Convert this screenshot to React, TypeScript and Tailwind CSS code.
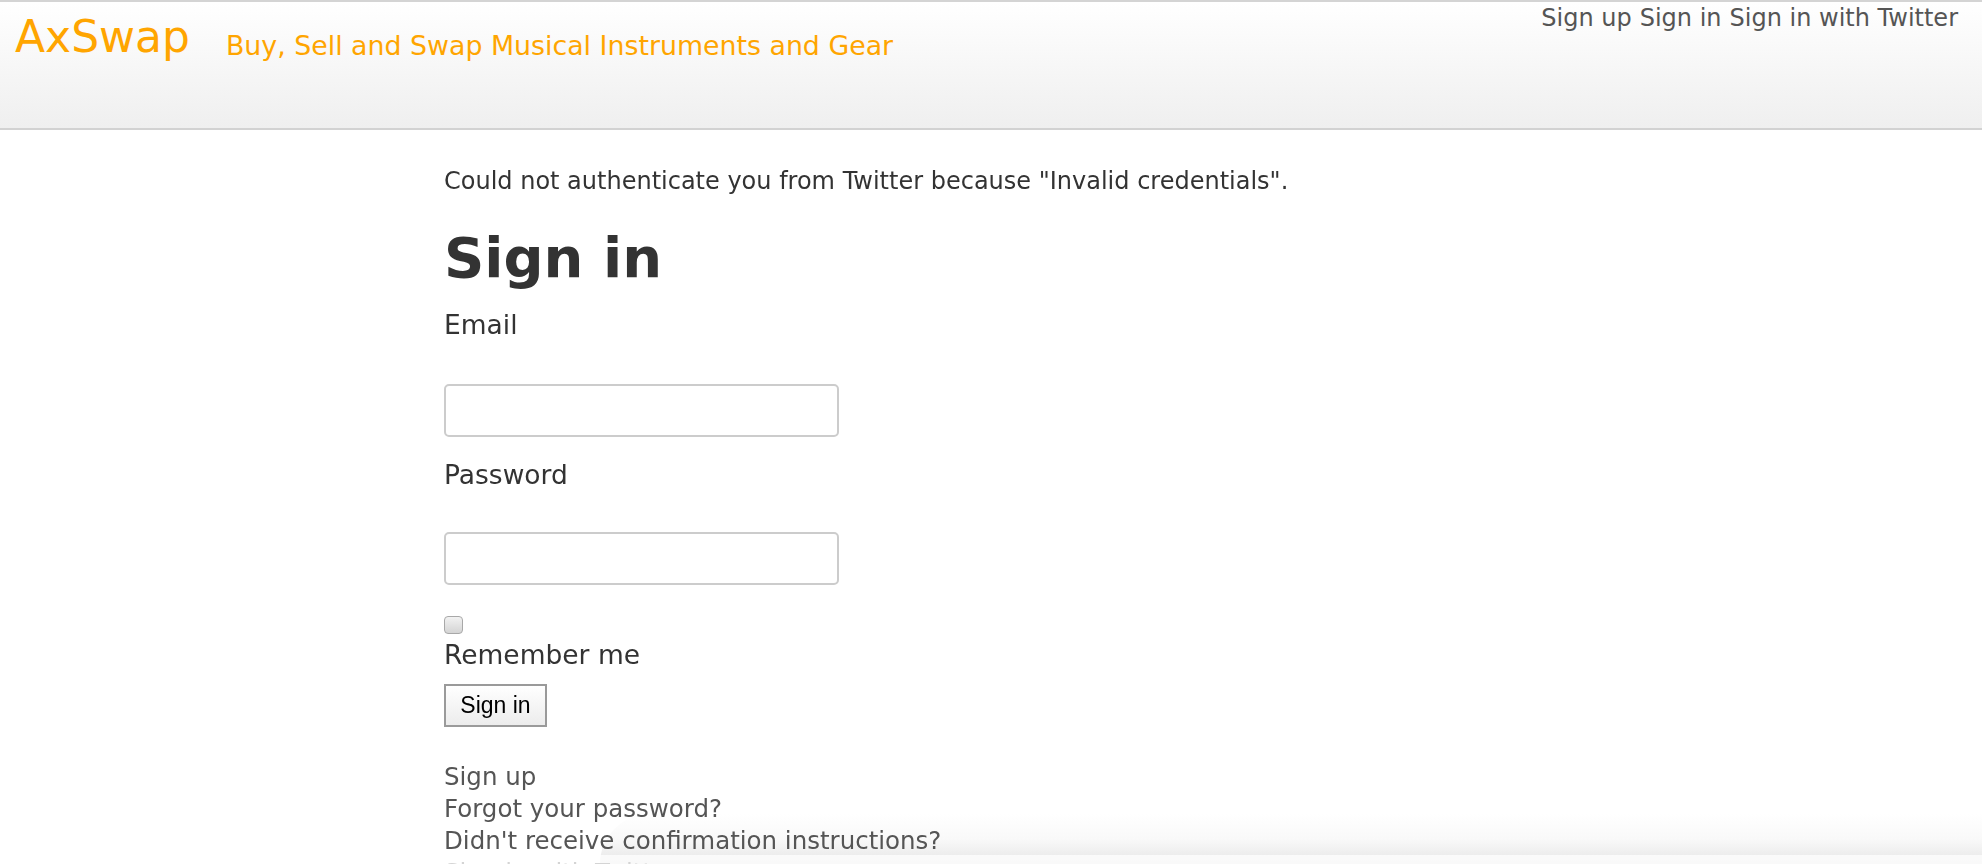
export default function App() {
  return (
    <div className="relative min-h-[864px] overflow-hidden bg-white font-['DejaVu_Sans',Verdana,sans-serif]">
      <header className="flex h-[130px] items-start justify-between border-y-2 border-t-[#d4d4d4] border-b-[#d2d2d2] bg-gradient-to-b from-white to-[#efefef]">
        <div className="flex items-start">
          <a className="ml-[15px] mt-[13px] text-[44px] leading-none text-[#ffa500]">AxSwap</a>
          <span className="ml-[36px] mt-[31px] text-[26.8px] leading-none text-[#ffa500]">
            Buy, Sell and Swap Musical Instruments and Gear
          </span>
        </div>
        <nav className="mr-[24px] mt-[4px] flex gap-[8px] text-[24px] leading-none text-[#555]">
          <a>Sign up</a>
          <a>Sign in</a>
          <a>Sign in with Twitter</a>
        </nav>
      </header>

      <div className="pointer-events-none fixed bottom-0 left-[600px] right-0 h-[50px] rounded-tl-[90px] bg-gradient-to-b from-white via-[#f9f9f9] to-[#e6e6e6]"></div>

      <main className="relative z-10 ml-[444px] flex flex-col items-start text-[#333]">
        <p className="mt-[35px] text-[24px] leading-[32px]">
          Could not authenticate you from Twitter because "Invalid credentials".
        </p>
        <h1 className="mt-[29px] text-[56px] font-bold leading-[64px]">Sign in</h1>

        <label className="mt-[19px] text-[26.5px] leading-[32px]">Email</label>
        <input
          type="email"
          className="mt-[43px] h-[53px] w-[395px] rounded-[5px] border-2 border-[#cccccc] bg-white outline-none"
        />

        <label className="mt-[22px] text-[26.5px] leading-[32px]">Password</label>
        <input
          type="password"
          className="mt-[41px] h-[53px] w-[395px] rounded-[5px] border-2 border-[#cccccc] bg-white outline-none"
        />

        <span className="mt-[31px] block h-[18px] w-[19px] rounded-[4px] border border-[#a8a8a8] bg-gradient-to-b from-[#f2f2f2] to-[#d4d4d4]"></span>
        <label className="mt-[5px] text-[26.5px] leading-[32px]">Remember me</label>

        <button className="mt-[13px] h-[43px] w-[103px] border-2 border-[#9a9a9a] bg-gradient-to-b from-white to-[#ececec] font-['Liberation_Sans',Arial,sans-serif] text-[23px] text-black">
          Sign in
        </button>

        <div className="mt-[34px] flex flex-col text-[24.5px] leading-[32px] text-[#555]">
          <a>Sign up</a>
          <a>Forgot your password?</a>
          <a>Didn't receive confirmation instructions?</a>
          <a>Sign in with Twitter</a>
        </div>
      </main>

      <div className="pointer-events-none fixed inset-x-0 bottom-0 z-20 h-[9px] bg-white/75"></div>
    </div>
  );
}
